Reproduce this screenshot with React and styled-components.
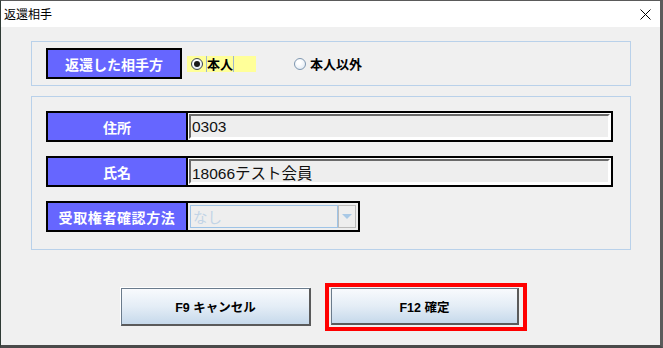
import React from 'react';
import styled, { createGlobalStyle } from 'styled-components';

const GlobalStyle = createGlobalStyle`
  html, body {
    margin: 0;
    padding: 0;
    background: #3a3a3a;
  }
  body {
    font-family: "Noto Sans CJK JP", "Liberation Sans", sans-serif;
  }
`;

const Window = styled.div`
  width: 663px;
  height: 348px;
  box-sizing: border-box;
  display: flex;
  flex-direction: column;
  border-top: 1px solid #5a5a5a;
  border-left: 1px solid #2f3b35;
  border-right: 3px solid #5c5c5c;
  border-bottom: 3px solid #4a4a4a;
  background: #f0f0f0;
`;

const TitleBar = styled.div`
  height: 26px;
  flex: none;
  display: flex;
  align-items: center;
  justify-content: space-between;
  background: #fff;
  padding: 0 9px 0 3px;
`;

const Title = styled.span`
  font-size: 12px;
  color: #000;
  line-height: 1;
`;

const Body = styled.div`
  flex: 1;
  display: flex;
  flex-direction: column;
  padding: 14px 0 0 30px;
  background: #f0f0f0;
`;

const GroupBox = styled.div`
  width: 600px;
  box-sizing: border-box;
  border: 1px solid #b9d1ea;
  padding: ${p => p.$padding};
  margin-top: ${p => p.$top || 0}px;
  display: flex;
  flex-direction: ${p => (p.$column ? 'column' : 'row')};
  gap: 14px;
`;

const Row = styled.div`
  display: flex;
  align-items: center;
  height: 31px;
`;

const FieldLabel = styled.div`
  width: ${p => p.$width}px;
  height: 31px;
  box-sizing: border-box;
  flex: none;
  display: flex;
  align-items: center;
  justify-content: center;
  background: #6666ff;
  border: 2px solid #000;
  border-right-width: ${p => (p.$joined ? 0 : 2)}px;
  color: #fff;
  font-size: 14px;
  font-weight: bold;
  letter-spacing: ${p => p.$spacing || 0}px;
`;

const TextField = styled.div`
  width: 427px;
  height: 31px;
  box-sizing: border-box;
  border: 2px solid #000;
  padding: 1px;
  background: #fff;
  display: flex;
`;

const TextInner = styled.div`
  flex: 1;
  display: flex;
  align-items: center;
  border-top: 2px solid #6a6a6a;
  border-left: 2px solid #6a6a6a;
  border-right: 2px solid #fff;
  border-bottom: 2px solid #fff;
  background: #eeeeee;
  padding-left: 1px;
  font-size: 15.5px;
  color: #111;
  font-family: "Liberation Sans", "Noto Sans CJK JP", sans-serif;
`;

const Combo = styled.div`
  width: 174px;
  height: 31px;
  box-sizing: border-box;
  border: 2px solid #000;
  padding: 2px;
  background: #eeeeee;
  display: flex;
`;

const ComboText = styled.div`
  flex: 1;
  display: flex;
  align-items: center;
  border: 1px solid #9ec3e6;
  padding-left: 2px;
  font-size: 14.5px;
  color: #c2d4e6;
`;

const ComboArrow = styled.div`
  width: 18px;
  box-sizing: border-box;
  border: 1px solid #bcbcbc;
  display: flex;
  align-items: center;
  justify-content: center;
  &::after {
    content: '';
    border-left: 5px solid transparent;
    border-right: 5px solid transparent;
    border-top: 5px solid #a9c9e6;
  }
`;

const RadioOption = styled.label`
  display: flex;
  align-items: center;
  height: 16px;
  margin-left: ${p => p.$left}px;
  padding: 0 ${p => (p.$highlight ? 22 : 0)}px 0 4px;
  background: ${p => (p.$highlight ? '#ffff99' : 'transparent')};
  gap: 3px;
  align-self: center;
`;

const RadioCircle = styled.span`
  width: 12px;
  height: 12px;
  box-sizing: border-box;
  border-radius: 50%;
  border: 1px solid ${p => (p.$checked ? '#3d4650' : '#7f97b0')};
  background: radial-gradient(circle at 40% 35%, #ffffff 20%, #d9e5f1 100%);
  display: flex;
  align-items: center;
  justify-content: center;
  &::after {
    content: '';
    display: ${p => (p.$checked ? 'block' : 'none')};
    width: 6px;
    height: 6px;
    border-radius: 50%;
    background: #1a1a1a;
  }
`;

const RadioText = styled.span`
  font-size: 13px;
  font-weight: bold;
  color: #000;
  line-height: 16px;
  border-left: 1px solid ${p => (p.$focus ? '#9fb6cc' : 'transparent')};
  border-right: 1px solid ${p => (p.$focus ? '#9fb6cc' : 'transparent')};
`;

const ButtonBar = styled.div`
  display: flex;
  align-items: center;
  margin: 33px 0 0 90px;
  gap: 14px;
`;

const ActionButton = styled.button`
  width: ${p => p.$width}px;
  height: ${p => p.$height}px;
  box-sizing: border-box;
  border: 1px solid #6a7b8c;
  border-right: 2px solid #5a5a5a;
  border-bottom: 2px solid #5a5a5a;
  box-shadow: ${p => (p.$raised ? '-1px -1px 0 #fff' : 'none')};
  background: linear-gradient(#f8fafd 0%, #e4edf6 50%, #c6d9eb 100%);
  font-family: "Liberation Sans", "Noto Sans CJK JP", sans-serif;
  font-size: 12.5px;
  font-weight: bold;
  color: #000;
  padding: 0;
  display: flex;
  align-items: center;
  justify-content: center;
`;

const FocusRing = styled.div`
  border: 4px solid #ff0000;
  padding: 1px 4px 2px 2px;
  display: flex;
`;

const CloseIcon = () => (
  <svg width="11" height="11" viewBox="0 0 11 11">
    <path d="M0.5 0.5 L10.5 10.5 M10.5 0.5 L0.5 10.5" stroke="#000" strokeWidth="1" fill="none" />
  </svg>
);

export default function App() {
  return (
    <>
      <GlobalStyle />
      <Window>
        <TitleBar>
          <Title>返還相手</Title>
          <CloseIcon />
        </TitleBar>
        <Body>
          <GroupBox $padding="6px 14px">
            <Row>
              <FieldLabel $width={136}>返還した相手方</FieldLabel>
              <RadioOption $left={5} $highlight>
                <RadioCircle $checked />
                <RadioText $focus>本人</RadioText>
              </RadioOption>
              <RadioOption $left={34}>
                <RadioCircle />
                <RadioText>本人以外</RadioText>
              </RadioOption>
            </Row>
          </GroupBox>
          <GroupBox $column $top={10} $padding="14px 14px 17px">
            <Row>
              <FieldLabel $width={140} $joined>住所</FieldLabel>
              <TextField><TextInner>0303</TextInner></TextField>
            </Row>
            <Row>
              <FieldLabel $width={140} $joined>氏名</FieldLabel>
              <TextField><TextInner>18066テスト会員</TextInner></TextField>
            </Row>
            <Row>
              <FieldLabel $width={140} $joined $spacing={0.6}>受取権者確認方法</FieldLabel>
              <Combo>
                <ComboText>なし</ComboText>
                <ComboArrow />
              </Combo>
            </Row>
          </GroupBox>
          <ButtonBar>
            <ActionButton $width={190} $height={38} $raised>F9 キャンセル</ActionButton>
            <FocusRing>
              <ActionButton $width={188} $height={37}>F12 確定</ActionButton>
            </FocusRing>
          </ButtonBar>
        </Body>
      </Window>
    </>
  );
}
